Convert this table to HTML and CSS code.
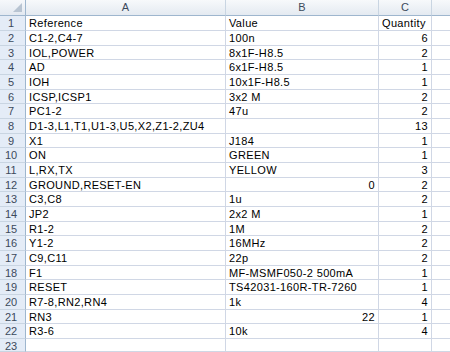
FILE: index.html
```html
<!DOCTYPE html>
<html>
<head>
<meta charset="utf-8">
<link rel="stylesheet" href="styles.css">
</head>
<body>
<div class="sheet">
  <div class="corner"><span class="tri"></span></div>
  <div class="colhead">A</div>
  <div class="colhead">B</div>
  <div class="colhead">C</div>
  <div class="colhead last"></div>

  <div class="rowhead">1</div><div class="cell">Reference</div><div class="cell">Value</div><div class="cell">Quantity</div><div class="cell last"></div>
  <div class="rowhead">2</div><div class="cell">C1-2,C4-7</div><div class="cell">100n</div><div class="cell num">6</div><div class="cell last"></div>
  <div class="rowhead">3</div><div class="cell">IOL,POWER</div><div class="cell">8x1F-H8.5</div><div class="cell num">2</div><div class="cell last"></div>
  <div class="rowhead">4</div><div class="cell">AD</div><div class="cell">6x1F-H8.5</div><div class="cell num">1</div><div class="cell last"></div>
  <div class="rowhead">5</div><div class="cell">IOH</div><div class="cell">10x1F-H8.5</div><div class="cell num">1</div><div class="cell last"></div>
  <div class="rowhead">6</div><div class="cell">ICSP,ICSP1</div><div class="cell">3x2 M</div><div class="cell num">2</div><div class="cell last"></div>
  <div class="rowhead">7</div><div class="cell">PC1-2</div><div class="cell">47u</div><div class="cell num">2</div><div class="cell last"></div>
  <div class="rowhead">8</div><div class="cell">D1-3,L1,T1,U1-3,U5,X2,Z1-2,ZU4</div><div class="cell"></div><div class="cell num">13</div><div class="cell last"></div>
  <div class="rowhead">9</div><div class="cell">X1</div><div class="cell">J184</div><div class="cell num">1</div><div class="cell last"></div>
  <div class="rowhead">10</div><div class="cell">ON</div><div class="cell">GREEN</div><div class="cell num">1</div><div class="cell last"></div>
  <div class="rowhead">11</div><div class="cell">L,RX,TX</div><div class="cell">YELLOW</div><div class="cell num">3</div><div class="cell last"></div>
  <div class="rowhead">12</div><div class="cell">GROUND,RESET-EN</div><div class="cell num">0</div><div class="cell num">2</div><div class="cell last"></div>
  <div class="rowhead">13</div><div class="cell">C3,C8</div><div class="cell">1u</div><div class="cell num">2</div><div class="cell last"></div>
  <div class="rowhead">14</div><div class="cell">JP2</div><div class="cell">2x2 M</div><div class="cell num">1</div><div class="cell last"></div>
  <div class="rowhead">15</div><div class="cell">R1-2</div><div class="cell">1M</div><div class="cell num">2</div><div class="cell last"></div>
  <div class="rowhead">16</div><div class="cell">Y1-2</div><div class="cell">16MHz</div><div class="cell num">2</div><div class="cell last"></div>
  <div class="rowhead">17</div><div class="cell">C9,C11</div><div class="cell">22p</div><div class="cell num">2</div><div class="cell last"></div>
  <div class="rowhead">18</div><div class="cell">F1</div><div class="cell">MF-MSMF050-2 500mA</div><div class="cell num">1</div><div class="cell last"></div>
  <div class="rowhead">19</div><div class="cell">RESET</div><div class="cell">TS42031-160R-TR-7260</div><div class="cell num">1</div><div class="cell last"></div>
  <div class="rowhead">20</div><div class="cell">R7-8,RN2,RN4</div><div class="cell">1k</div><div class="cell num">4</div><div class="cell last"></div>
  <div class="rowhead">21</div><div class="cell">RN3</div><div class="cell num">22</div><div class="cell num">1</div><div class="cell last"></div>
  <div class="rowhead">22</div><div class="cell">R3-6</div><div class="cell">10k</div><div class="cell num">4</div><div class="cell last"></div>
  <div class="rowhead">23</div><div class="cell"></div><div class="cell"></div><div class="cell"></div><div class="cell last"></div>
</div>
</body>
</html>
```

FILE: styles.css
```css
html, body {
  margin: 0;
  padding: 0;
  background: #ffffff;
  overflow: hidden;
}
.sheet {
  width: 450px;
  height: 352px;
  overflow: hidden;
  display: grid;
  grid-template-columns: 26px 200px 153px 53px 18px;
  grid-template-rows: 16px repeat(7, 15px 15px 14px) 15px 13px;
  font-family: "Liberation Sans", Arial, sans-serif;
  font-size: 11px;
  color: #000;
}
.corner {
  position: relative;
  background: linear-gradient(#f6f8fb, #e3e9f1);
  border-right: 1px solid #9eb6ce;
  border-bottom: 1px solid #9eb6ce;
}
.tri {
  position: absolute;
  right: 3px;
  bottom: 3px;
  width: 0;
  height: 0;
  border-left: 9px solid transparent;
  border-bottom: 9px solid #b8c4d2;
}
.colhead {
  background: linear-gradient(#f7f9fb, #e4eaf1);
  border-right: 1px solid #c9d5e2;
  border-bottom: 1px solid #9eb6ce;
  color: #3c4a5c;
  text-align: center;
  line-height: 15px;
}
.rowhead {
  background: #e4ecf7;
  border-right: 1px solid #9eb6ce;
  border-bottom: 1px solid #c9d5e2;
  color: #3c4a5c;
  text-align: center;
  padding-right: 3px;
  line-height: 14px;
  box-sizing: border-box;
}
.cell {
  border-right: 1px solid #d0d7e5;
  border-bottom: 1px solid #d0d7e5;
  padding: 0 3px;
  line-height: 14px;
  letter-spacing: 0.35px;
  white-space: nowrap;
  overflow: hidden;
  box-sizing: border-box;
}
.num {
  text-align: right;
  padding-right: 3px;
}
.last {
  border-right: none;
}
```
